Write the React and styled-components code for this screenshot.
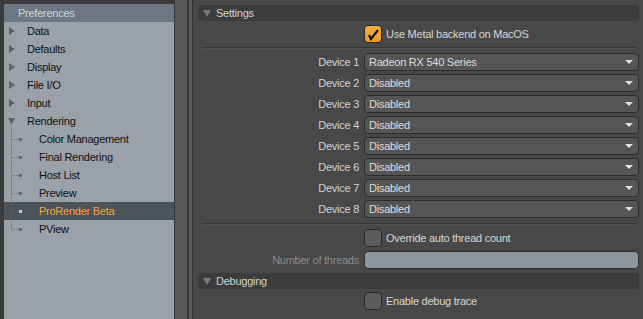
import styled, { createGlobalStyle } from 'styled-components';

const GlobalStyle = createGlobalStyle`
  html, body {
    margin: 0;
    padding: 0;
    height: 100%;
    background: #484848;
  }
  body {
    font-family: "Liberation Sans", Arial, sans-serif;
    font-size: 11px;
    letter-spacing: -0.25px;
  }
  #root {
    height: 100%;
  }
`;

const Window = styled.div`
  display: flex;
  height: 100vh;
  overflow: hidden;
`;

const Sidebar = styled.aside`
  display: flex;
  width: 193px;
  flex-shrink: 0;
  background: #3a3a3a;
  padding: 4px 0 0 4px;
  box-sizing: border-box;
`;

const Tree = styled.div`
  width: 170px;
  background: #9aa1a8;
  border-top-left-radius: 3px;
  border-top-right-radius: 3px;
  display: flex;
  flex-direction: column;
`;

const TreeHeader = styled.div`
  height: 18px;
  line-height: 18px;
  padding-left: 14px;
  background: #6c7783;
  color: #cdd5dd;
  border-top-left-radius: 3px;
  border-top-right-radius: 3px;
`;

const TreeRow = styled.div`
  display: flex;
  align-items: center;
  height: 18px;
  background: ${({ $selected }) => ($selected ? '#4b535b' : 'transparent')};
  color: ${({ $selected }) => ($selected ? '#f4a33a' : '#111')};
`;

const Prefix = styled.div`
  width: ${({ $child }) => ($child ? 35 : 23)}px;
  height: 18px;
  flex-shrink: 0;
  display: flex;
`;

const Gutter = styled.div`
  width: 19px;
  flex-shrink: 0;
  margin-top: -4px;
  background: linear-gradient(
    to right,
    #383838 0 1px,
    #575757 1px 13px,
    #383838 13px 15px,
    #5b5b5b 15px 18px,
    #333 18px 19px
  );
`;

const Main = styled.main`
  flex: 1;
  display: flex;
  flex-direction: column;
  padding: 5px 4px 0 5px;
  min-width: 0;
`;

const SectionHeader = styled.div`
  display: flex;
  align-items: center;
  gap: 5px;
  height: 16px;
  padding-left: 5px;
  margin-top: ${({ $mt }) => $mt || 0}px;
  background: #3c3c3c;
  border-radius: 4px;
  color: #d2d2d2;
`;

const Row = styled.div`
  display: grid;
  grid-template-columns: 1fr 275px;
  column-gap: 5px;
  align-items: center;
  height: 18px;
  margin-top: ${({ $mt }) => $mt || 0}px;
`;

const Label = styled.span`
  text-align: right;
  color: ${({ $dim }) => ($dim ? '#8b8b8b' : '#d2d2d2')};
`;

const CheckField = styled.label`
  grid-column: 2;
  display: flex;
  align-items: center;
  gap: 4px;
  color: #d6d6d6;
`;

const Box = styled.span`
  width: 16px;
  height: 16px;
  border: 1px solid #2a2a2a;
  border-radius: 4px;
  background: ${({ $on }) => ($on ? 'linear-gradient(#f6ad45, #ee9a28)' : '#5b5b5b')};
  display: flex;
  align-items: center;
  justify-content: center;
`;

const Separator = styled.div`
  height: 1px;
  margin: ${({ $m }) => $m};
  margin-left: 4px;
  margin-right: 2px;
  background: #363636;
  box-shadow: 0 1px 0 #505050;
`;

const Select = styled.div`
  position: relative;
  height: 16px;
  line-height: 16px;
  padding-left: 4px;
  border: 1px solid #2c2c2c;
  border-radius: 4px;
  background: #555;
  color: #dcdcdc;
`;

const Caret = styled.span`
  position: absolute;
  right: 5px;
  top: 6px;
  width: 0;
  height: 0;
  border-left: 4px solid transparent;
  border-right: 4px solid transparent;
  border-top: 4px solid #e2e2e2;
`;

const NumberInput = styled.div`
  height: 16px;
  border: 1px solid #2c2c2c;
  border-radius: 4px;
  background: #8e959b;
`;

function Arrow({ open }) {
  return (
    <svg width="23" height="18">
      {open ? (
        <>
          <path d="M4 6 L11 6 L7.5 13 Z" fill="#5d646b" />
          <line x1="7.5" y1="14" x2="7.5" y2="18" stroke="#666" strokeDasharray="1 1" />
        </>
      ) : (
        <path d="M5 5 L11 9 L5 13 Z" fill="#5d646b" />
      )}
    </svg>
  );
}

function Connector({ last, selected }) {
  return (
    <svg width="35" height="18">
      <line x1="7.5" y1="0" x2="7.5" y2={last ? 9 : 18} stroke="#666" strokeDasharray="1 1" />
      <line x1="8" y1="9.5" x2="15" y2="9.5" stroke="#666" strokeDasharray="1 1" />
      <rect x="15" y="8" width="3" height="3" fill={selected ? '#c9c9c9' : '#6b6b6b'} />
    </svg>
  );
}

function Check() {
  return (
    <svg width="14" height="14" viewBox="0 0 14 14">
      <path d="M3 8 L5 12 L12 3" fill="none" stroke="#111" strokeWidth="2.2" strokeLinejoin="miter" />
    </svg>
  );
}

const topItems = ['Data', 'Defaults', 'Display', 'File I/O', 'Input'];
const renderItems = ['Color Management', 'Final Rendering', 'Host List', 'Preview', 'ProRender Beta', 'PView'];
const devices = ['Radeon RX 540 Series', 'Disabled', 'Disabled', 'Disabled', 'Disabled', 'Disabled', 'Disabled', 'Disabled'];

function HeaderTriangle() {
  return (
    <svg width="8" height="8">
      <path d="M0 1 L8 1 L4 8 Z" fill="#7a7a7a" />
    </svg>
  );
}

export default function App() {
  return (
    <>
      <GlobalStyle />
      <Window>
        <Sidebar>
          <Tree>
            <TreeHeader>Preferences</TreeHeader>
            {topItems.map((name) => (
              <TreeRow key={name}>
                <Prefix><Arrow /></Prefix>
                {name}
              </TreeRow>
            ))}
            <TreeRow>
              <Prefix><Arrow open /></Prefix>
              Rendering
            </TreeRow>
            {renderItems.map((name, i) => {
              const selected = name === 'ProRender Beta';
              return (
                <TreeRow key={name} $selected={selected}>
                  <Prefix $child>
                    <Connector last={i === renderItems.length - 1} selected={selected} />
                  </Prefix>
                  {name}
                </TreeRow>
              );
            })}
          </Tree>
          <Gutter />
        </Sidebar>
        <Main>
          <SectionHeader>
            <HeaderTriangle />
            Settings
          </SectionHeader>
          <Row $mt={4}>
            <CheckField>
              <Box $on><Check /></Box>
              Use Metal backend on MacOS
            </CheckField>
          </Row>
          <Separator $m="4px 0 5px" />
          {devices.map((d, i) => (
            <Row key={i} $mt={i === 0 ? 0 : 3}>
              <Label>Device {i + 1}</Label>
              <Select>
                {d}
                <Caret />
              </Select>
            </Row>
          ))}
          <Separator $m="5px 0 5px" />
          <Row>
            <CheckField>
              <Box />
              Override auto thread count
            </CheckField>
          </Row>
          <Row $mt={4}>
            <Label $dim>Number of threads</Label>
            <NumberInput />
          </Row>
          <SectionHeader $mt={4}>
            <HeaderTriangle />
            Debugging
          </SectionHeader>
          <Row $mt={3}>
            <CheckField>
              <Box />
              Enable debug trace
            </CheckField>
          </Row>
        </Main>
      </Window>
    </>
  );
}
